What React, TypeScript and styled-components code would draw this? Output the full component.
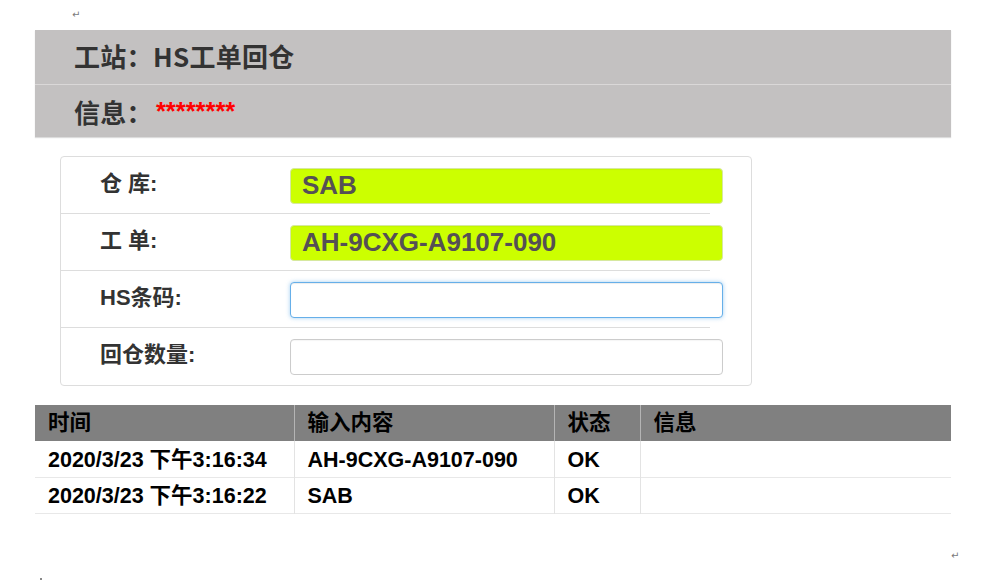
import React from "react";
import styled, { createGlobalStyle } from "styled-components";

const GlobalStyle = createGlobalStyle`
  html, body {
    margin: 0;
    padding: 0;
    background: #ffffff;
  }
  body {
    font-family: "Liberation Sans", "Noto Sans CJK SC", sans-serif;
    color: #333333;
  }
`;

const Page = styled.div`
  width: 1003px;
  height: 582px;
  overflow: hidden;
  display: flex;
  flex-direction: column;
`;

const MarkLine = styled.div<{ $indent: number; $height: number }>`
  height: ${(p) => p.$height}px;
  padding-left: ${(p) => p.$indent}px;
  font-family: "DejaVu Sans", sans-serif;
  font-size: 10px;
  line-height: ${(p) => p.$height}px;
  color: #7a7a7a;
`;

const Band = styled.div`
  margin-left: 35px;
  width: 916px;
  background: #c3c1c1;
  box-shadow: 0 1px 1px #dcdcdc;
`;

const BandRow = styled.div<{ $height: number; $divider?: boolean }>`
  height: ${(p) => p.$height}px;
  display: flex;
  align-items: center;
  padding-left: 39px;
  border-bottom: ${(p) => (p.$divider ? "1px solid #dad8d8" : "none")};
  box-sizing: border-box;
`;

const BandTitle = styled.span`
  font-family: "Noto Sans CJK SC", sans-serif;
  font-weight: 700;
  font-size: 26px;
  line-height: 1;
  color: #333333;
  letter-spacing: 0.3px;
  margin-top: -2px;
`;

const BandLabel = styled(BandTitle)`
  margin-top: 2px;
`;

const Secret = styled.span`
  margin-left: 3px;
  font-family: "Liberation Sans", sans-serif;
  font-weight: 700;
  font-size: 25.5px;
  line-height: 1;
  color: #ff0000;
  margin-top: 2px;
`;

const Card = styled.div`
  margin: 19px 0 0 60px;
  width: 692px;
  border: 1px solid #dddddd;
  border-radius: 4px;
  box-sizing: border-box;
  display: flex;
  flex-direction: column;
`;

const FormRow = styled.div<{ $divider?: boolean }>`
  position: relative;
  height: 57px;
  display: grid;
  grid-template-columns: 190px 433px;
  align-items: center;
  padding-left: 39px;

  &::after {
    content: "";
    display: ${(p) => (p.$divider ? "block" : "none")};
    position: absolute;
    left: 0;
    bottom: 0;
    width: 649px;
    border-bottom: 1px solid #dddddd;
  }
`;

const FieldLabel = styled.label`
  font-family: "Liberation Sans", "Noto Sans CJK SC", sans-serif;
  font-weight: 700;
  font-size: 22px;
  line-height: 1;
  color: #333333;
  white-space: pre;
  padding-bottom: 3px;
`;

const Field = styled.input<{ $tone: "filled" | "focus" | "plain" }>`
  box-sizing: border-box;
  width: 433px;
  height: 36px;
  padding: 0 11px;
  border-radius: 4px;
  outline: none;
  font-family: "Liberation Sans", sans-serif;
  font-weight: 700;
  font-size: 26px;
  color: #555055;
  background: ${(p) => (p.$tone === "filled" ? "#ccff00" : "#ffffff")};
  border: 1px solid
    ${(p) =>
      p.$tone === "filled" ? "#d6e8a0" : p.$tone === "focus" ? "#66afe9" : "#cccccc"};
  box-shadow: ${(p) =>
    p.$tone === "focus"
      ? "inset 0 1px 1px rgba(0,0,0,.075), 0 0 4px rgba(102,175,233,.6)"
      : "inset 0 1px 1px rgba(0,0,0,.04)"};
`;

const Table = styled.table`
  margin: 19px 0 0 35px;
  width: 916px;
  border-collapse: collapse;
  table-layout: fixed;
  font-family: "Liberation Sans", "Noto Sans CJK SC", sans-serif;
  font-weight: 700;
  font-size: 21.5px;
  line-height: 24px;
  color: #000000;
`;

const HeadCell = styled.th`
  height: 36px;
  box-sizing: border-box;
  padding: 0 0 0 13px;
  text-align: left;
  vertical-align: middle;
  background: #808080;
  font-weight: 700;
  border-left: 1px solid #b4b4b4;
  &:first-child {
    border-left: none;
  }
`;

const BodyRow = styled.tr`
  border-bottom: 1px solid #e8e8e8;
`;

const Cell = styled.td`
  height: 36px;
  box-sizing: border-box;
  padding: 2px 0 0 13px;
  vertical-align: middle;
  white-space: nowrap;
  border-left: 1px solid #e3e3e3;
  &:first-child {
    border-left: none;
  }
`;

const Footer = styled.div`
  margin-top: 37px;
  display: flex;
  flex-direction: column;
`;

const EndMark = styled.div`
  padding-left: 951px;
  font-family: "DejaVu Sans", sans-serif;
  font-size: 10px;
  line-height: 10px;
  color: #7a7a7a;
`;

const Dot = styled.div`
  margin: 17px 0 0 40px;
  width: 2px;
  height: 2px;
  background: #888888;
`;

const fields: { label: string; value: string; tone: "filled" | "focus" | "plain" }[] = [
  { label: "仓 库:", value: "SAB", tone: "filled" },
  { label: "工 单:", value: "AH-9CXG-A9107-090", tone: "filled" },
  { label: "HS条码:", value: "", tone: "focus" },
  { label: "回仓数量:", value: "", tone: "plain" },
];

const records = [
  { time: "2020/3/23 下午3:16:34", input: "AH-9CXG-A9107-090", status: "OK", info: "" },
  { time: "2020/3/23 下午3:16:22", input: "SAB", status: "OK", info: "" },
];

const columnWidths = [259, 260, 86];

export default function App() {
  return (
    <Page>
      <GlobalStyle />
      <MarkLine $indent={72} $height={30}>↵</MarkLine>
      <Band>
        <BandRow $height={55} $divider>
          <BandTitle>工站：HS工单回仓</BandTitle>
        </BandRow>
        <BandRow $height={52}>
          <BandLabel>信息：</BandLabel>
          <Secret>********</Secret>
        </BandRow>
      </Band>
      <Card>
        {fields.map((f, i) => (
          <FormRow key={f.label} $divider={i < fields.length - 1}>
            <FieldLabel>{f.label}</FieldLabel>
            <Field $tone={f.tone} value={f.value} readOnly />
          </FormRow>
        ))}
      </Card>
      <Table>
        <colgroup>
          {columnWidths.map((w) => (
            <col key={w} style={{ width: w }} />
          ))}
          <col />
        </colgroup>
        <thead>
          <tr>
            <HeadCell>时间</HeadCell>
            <HeadCell>输入内容</HeadCell>
            <HeadCell>状态</HeadCell>
            <HeadCell>信息</HeadCell>
          </tr>
        </thead>
        <tbody>
          {records.map((r) => (
            <BodyRow key={r.time}>
              <Cell>{r.time}</Cell>
              <Cell>{r.input}</Cell>
              <Cell>{r.status}</Cell>
              <Cell>{r.info}</Cell>
            </BodyRow>
          ))}
        </tbody>
      </Table>
      <Footer>
        <EndMark>↵</EndMark>
        <Dot />
      </Footer>
    </Page>
  );
}
